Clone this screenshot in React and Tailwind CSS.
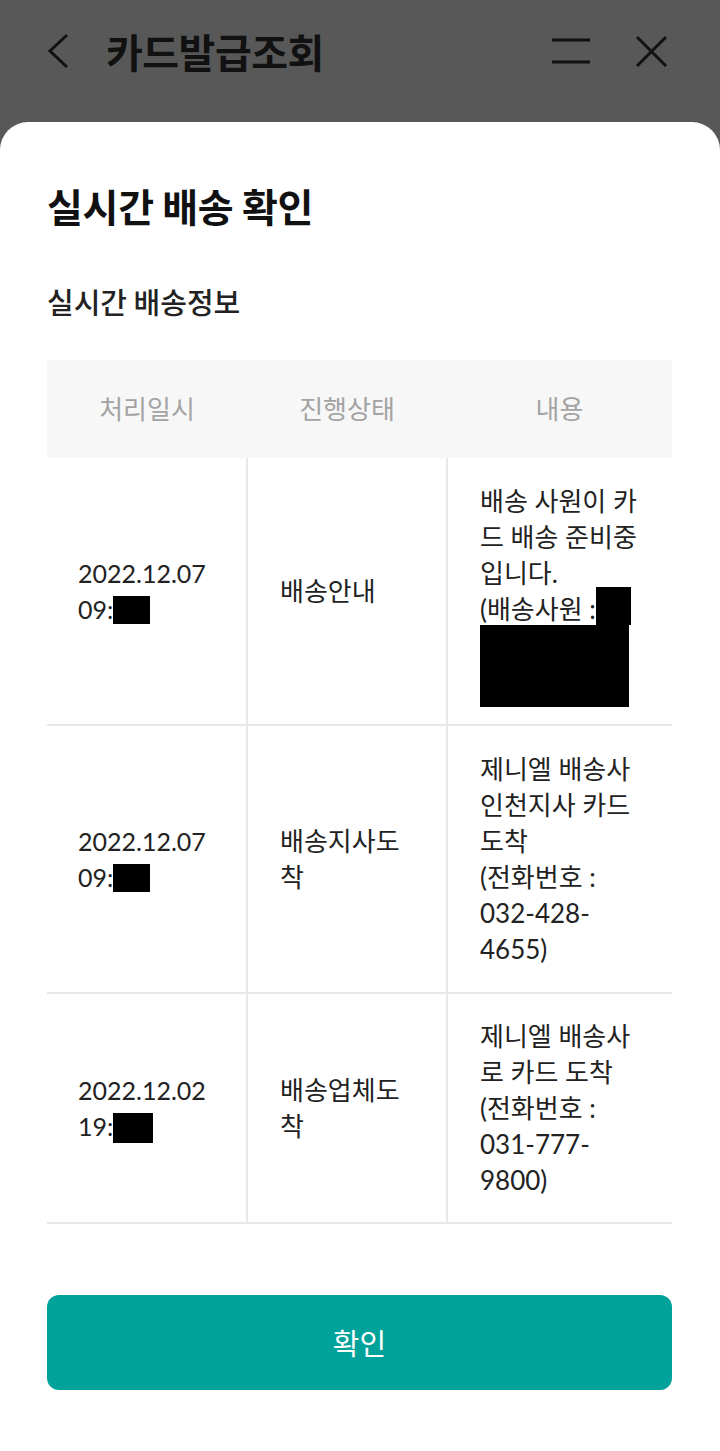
import React from 'react'

const rows = [
  { date: '2022.12.07', time: '09:', status: '배송안내', first: true },
  {
    date: '2022.12.07',
    time: '09:',
    status: '배송지사도착',
    text: '제니엘 배송사 인천지사 카드 도착',
    phone: ['032-428-', '4655)'],
  },
  {
    date: '2022.12.02',
    time: '19:',
    status: '배송업체도착',
    text: '제니엘 배송사로 카드 도착',
    phone: ['031-777-', '9800)'],
  },
]

const Redact = ({ className }) => <span className={`inline-block bg-black align-top ${className}`} />

const App = () => {
  return (
    <div className="min-h-screen bg-[#585858] font-['Noto_Sans_CJK_KR',sans-serif] text-[#111]">
      <header className="h-[122px] flex items-center pl-[46px] pr-[52px] pb-[20px]">
        <svg width="24" height="36" viewBox="0 0 24 36" fill="none" className="mr-[36px]">
          <path d="M21 2 L4 18 L21 34" stroke="#111" strokeWidth="3" />
        </svg>
        <h1 className="text-[40px] font-bold leading-none tracking-[-0.5px]">카드발급조회</h1>
        <div className="ml-auto flex items-center gap-[45px]">
          <svg width="38" height="26" viewBox="0 0 38 26" fill="none">
            <path d="M0 2 H38 M0 24 H38" stroke="#111" strokeWidth="3" />
          </svg>
          <svg width="33" height="33" viewBox="0 0 33 33" fill="none">
            <path d="M2 2 L31 31 M31 2 L2 31" stroke="#111" strokeWidth="3" />
          </svg>
        </div>
      </header>

      <main className="bg-white rounded-t-[28px] min-h-[1329px] px-[47px] pt-[57px] pb-[60px]">
        <h2 className="text-[39px] font-bold leading-[52px] tracking-[-0.3px]">실시간 배송 확인</h2>
        <h3 className="mt-[50px] text-[29px] font-medium leading-[40px] text-[#222]">실시간 배송정보</h3>

        <table className="mt-[39px] w-[625px] table-fixed border-collapse font-['Lato','Noto_Sans_CJK_KR',sans-serif] text-[26px] leading-[36px] text-[#222]">
          <colgroup>
            <col className="w-[200px]" />
            <col className="w-[200px]" />
            <col className="w-[225px]" />
          </colgroup>
          <thead>
            <tr className="bg-[#f7f7f7] h-[98px]">
              <th className="font-normal text-[26px] text-[#a3a3a3] text-center">처리일시</th>
              <th className="font-normal text-[26px] text-[#a3a3a3] text-center">진행상태</th>
              <th className="font-normal text-[26px] text-[#a3a3a3] text-center">내용</th>
            </tr>
          </thead>
          <tbody>
            {rows.map((row, i) => (
              <tr key={i} className="border-b-2 border-[#e8e8e8]">
                <td className="align-middle pl-[31px] pr-[20px] py-[25px] text-left text-[25px]">
                  {row.date}
                  <br />
                  {row.time}
                  <Redact className={i === 2 ? 'w-[40px] h-[30px] mt-[5px]' : 'w-[37px] h-[28px] mt-[5px]'} />
                </td>
                <td className="align-middle pl-[32px] pr-[36px] py-[25px] border-l-2 border-[#e8e8e8] break-all">
                  {row.status}
                </td>
                <td className={`align-middle pl-[32px] pr-[30px] border-l-2 border-[#e8e8e8] ${i === 2 ? 'py-[24px]' : 'py-[25px]'}`}>
                  {row.first ? (
                    <div className="h-[216px]">
                      배송 사원이 카드 배송 준비중입니다.
                      <br />
                      (배송사원 :<Redact className="w-[35px] h-[38px] mt-[-4px]" />
                      <div className="w-[149px] h-[82px] bg-black mt-[-2px]" />
                    </div>
                  ) : (
                    <>
                      {row.text}
                      <br />
                      (전화번호 :
                      <br />
                      {row.phone[0]}
                      <wbr />
                      {row.phone[1]}
                    </>
                  )}
                </td>
              </tr>
            ))}
          </tbody>
        </table>

        <button className="mt-[71px] w-[625px] h-[95px] rounded-[12px] bg-[#00a29a] text-white text-[29px] font-['Noto_Sans_CJK_KR',sans-serif]">
          확인
        </button>
      </main>
    </div>
  )
}

export default App
